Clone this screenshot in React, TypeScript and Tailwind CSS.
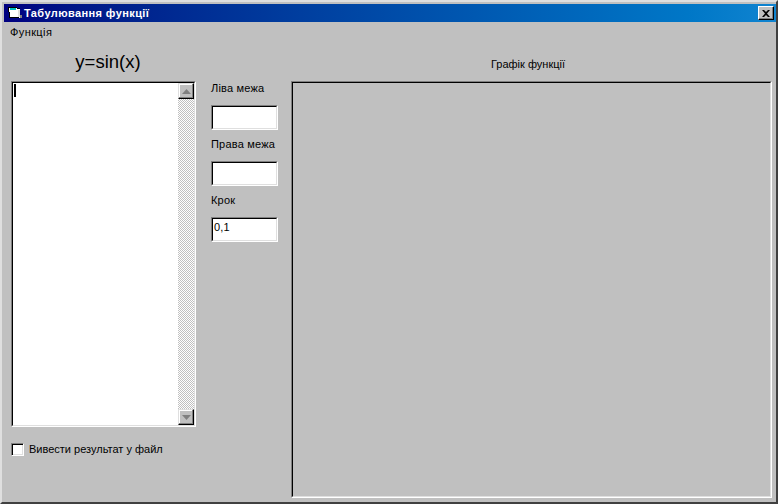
function ScrollButton({ down }: { down?: boolean }) {
  return (
    <div className="flex h-[16px] w-[16px] shrink-0 items-center justify-center border border-t-[#dfdfdf] border-l-[#dfdfdf] border-r-black border-b-black bg-[#c0c0c0] shadow-[inset_-1px_-1px_0_#808080,inset_1px_1px_0_#fff]">
      <svg width="9" height="5" viewBox="0 0 9 5" className={down ? "rotate-180" : ""}>
        <path d="M4.5 0 L9 5 L0 5 Z" fill="#808080" />
      </svg>
    </div>
  );
}

function Field({ label, value }: { label: string; value?: string }) {
  return (
    <div className="flex flex-col">
      <div className="h-[24px] pt-[1px] leading-[13px] tracking-[0.2px]">{label}</div>
      <div className="h-[25px] w-[67px] border border-t-[#808080] border-l-[#808080] border-r-white border-b-white bg-white">
        <div className="h-full w-full border border-t-black border-l-black border-r-[#dfdfdf] border-b-[#dfdfdf] pl-[1px] pt-[2px] leading-[13px] tracking-[0.2px]">{value}</div>
      </div>
      <div className="h-[7px]" />
    </div>
  );
}

export default function App() {
  return (
    <div className="h-[504px] w-[778px] overflow-hidden bg-[#c0c0c0] font-['Liberation_Sans',sans-serif] text-[11px] text-black">
      <div className="flex h-full w-full flex-col border-2 border-t-[#dfdfdf] border-l-[#dfdfdf] border-r-[#404040] border-b-[#404040] p-[2px] pr-[0px] pb-0">
        <div className="flex h-[18px] shrink-0 items-center bg-gradient-to-r from-[#000080] to-[#1084d0] pl-[3px] pr-[2px] text-white">
          <svg width="16" height="14" viewBox="0 0 16 14" className="shrink-0">
            <path d="M1 1h9v2h3v9H3V6H1z" fill="#fff" />
            <path d="M1 1h9v1H1zM1 1h1v5H1zM2 6h1v6H2zM3 11h9v1H3zM10 2h3v1h-3z" fill="#000" />
            <path d="M3 2h6v2H3z" fill="#00c0c0" />
            <path d="M11 4h2v7h-2z" fill="#dfdfdf" />
            <path d="M13 9h2v3h-2z" fill="#808080" />
          </svg>
          <div className="ml-[1px] font-bold tracking-[0.4px]">Табулювання функції</div>
          <div className="ml-auto flex h-[14px] w-[16px] items-center justify-center border border-t-white border-l-white border-r-black border-b-black bg-[#c0c0c0] shadow-[inset_-1px_-1px_0_#808080]">
            <svg width="8" height="7" viewBox="0 0 8 7">
              <path d="M0 0h2l2 2 2-2h2L5 3.5 8 7H6L4 5 2 7H0l3-3.5z" fill="#000" />
            </svg>
          </div>
        </div>
        <div className="flex h-[19px] shrink-0 items-center pl-[6px] pt-[1px] tracking-[0.4px]">Функція</div>
        <div className="flex min-h-0 flex-1 pl-[7px] pr-[2px]">
          <div className="flex w-[185px] shrink-0 flex-col">
            <div className="flex h-[40px] items-start justify-center pt-[11px] pl-[9px] text-[18.5px] leading-[20px]">y=sin(x)</div>
            <div className="h-[346px] border border-t-[#808080] border-l-[#808080] border-r-white border-b-white bg-white">
              <div className="h-full w-full border border-t-black border-l-black border-r-[#dfdfdf] border-b-[#dfdfdf]">
                <div className="flex h-full">
                  <div className="flex-1">
                    <div className="ml-[1px] mt-[1px] h-[13px] w-[2px] bg-black" />
                  </div>
                  <div className="flex w-[16px] flex-col justify-between bg-[repeating-conic-gradient(#c0c0c0_0_25%,#fff_0_50%)] bg-[length:2px_2px]">
                    <ScrollButton />
                    <ScrollButton down />
                  </div>
                </div>
              </div>
            </div>
            <div className="mt-[14px] flex items-center">
              <div className="h-[13px] w-[13px] border border-t-[#808080] border-l-[#808080] border-r-white border-b-white bg-white shadow-[inset_1px_1px_0_#000,inset_-1px_-1px_0_#dfdfdf]" />
              <div className="ml-[5px]">Вивести результат у файл</div>
            </div>
          </div>
          <div className="ml-[15px] flex w-[67px] shrink-0 flex-col pt-[40px]">
            <Field label="Ліва межа" />
            <Field label="Права межа" />
            <Field label="Крок" value="0,1" />
          </div>
          <div className="ml-[13px] flex min-w-0 flex-1 flex-col">
            <div className="flex h-[40px] items-start justify-center pt-[17px] pr-[9px] leading-[13px]">Графік функції</div>
            <div className="mr-[2px] h-[417px] border border-t-[#808080] border-l-[#808080] border-r-white border-b-white">
              <div className="h-full w-full border border-t-black border-l-black border-r-[#dfdfdf] border-b-[#dfdfdf]" />
            </div>
          </div>
        </div>
      </div>
    </div>
  );
}
